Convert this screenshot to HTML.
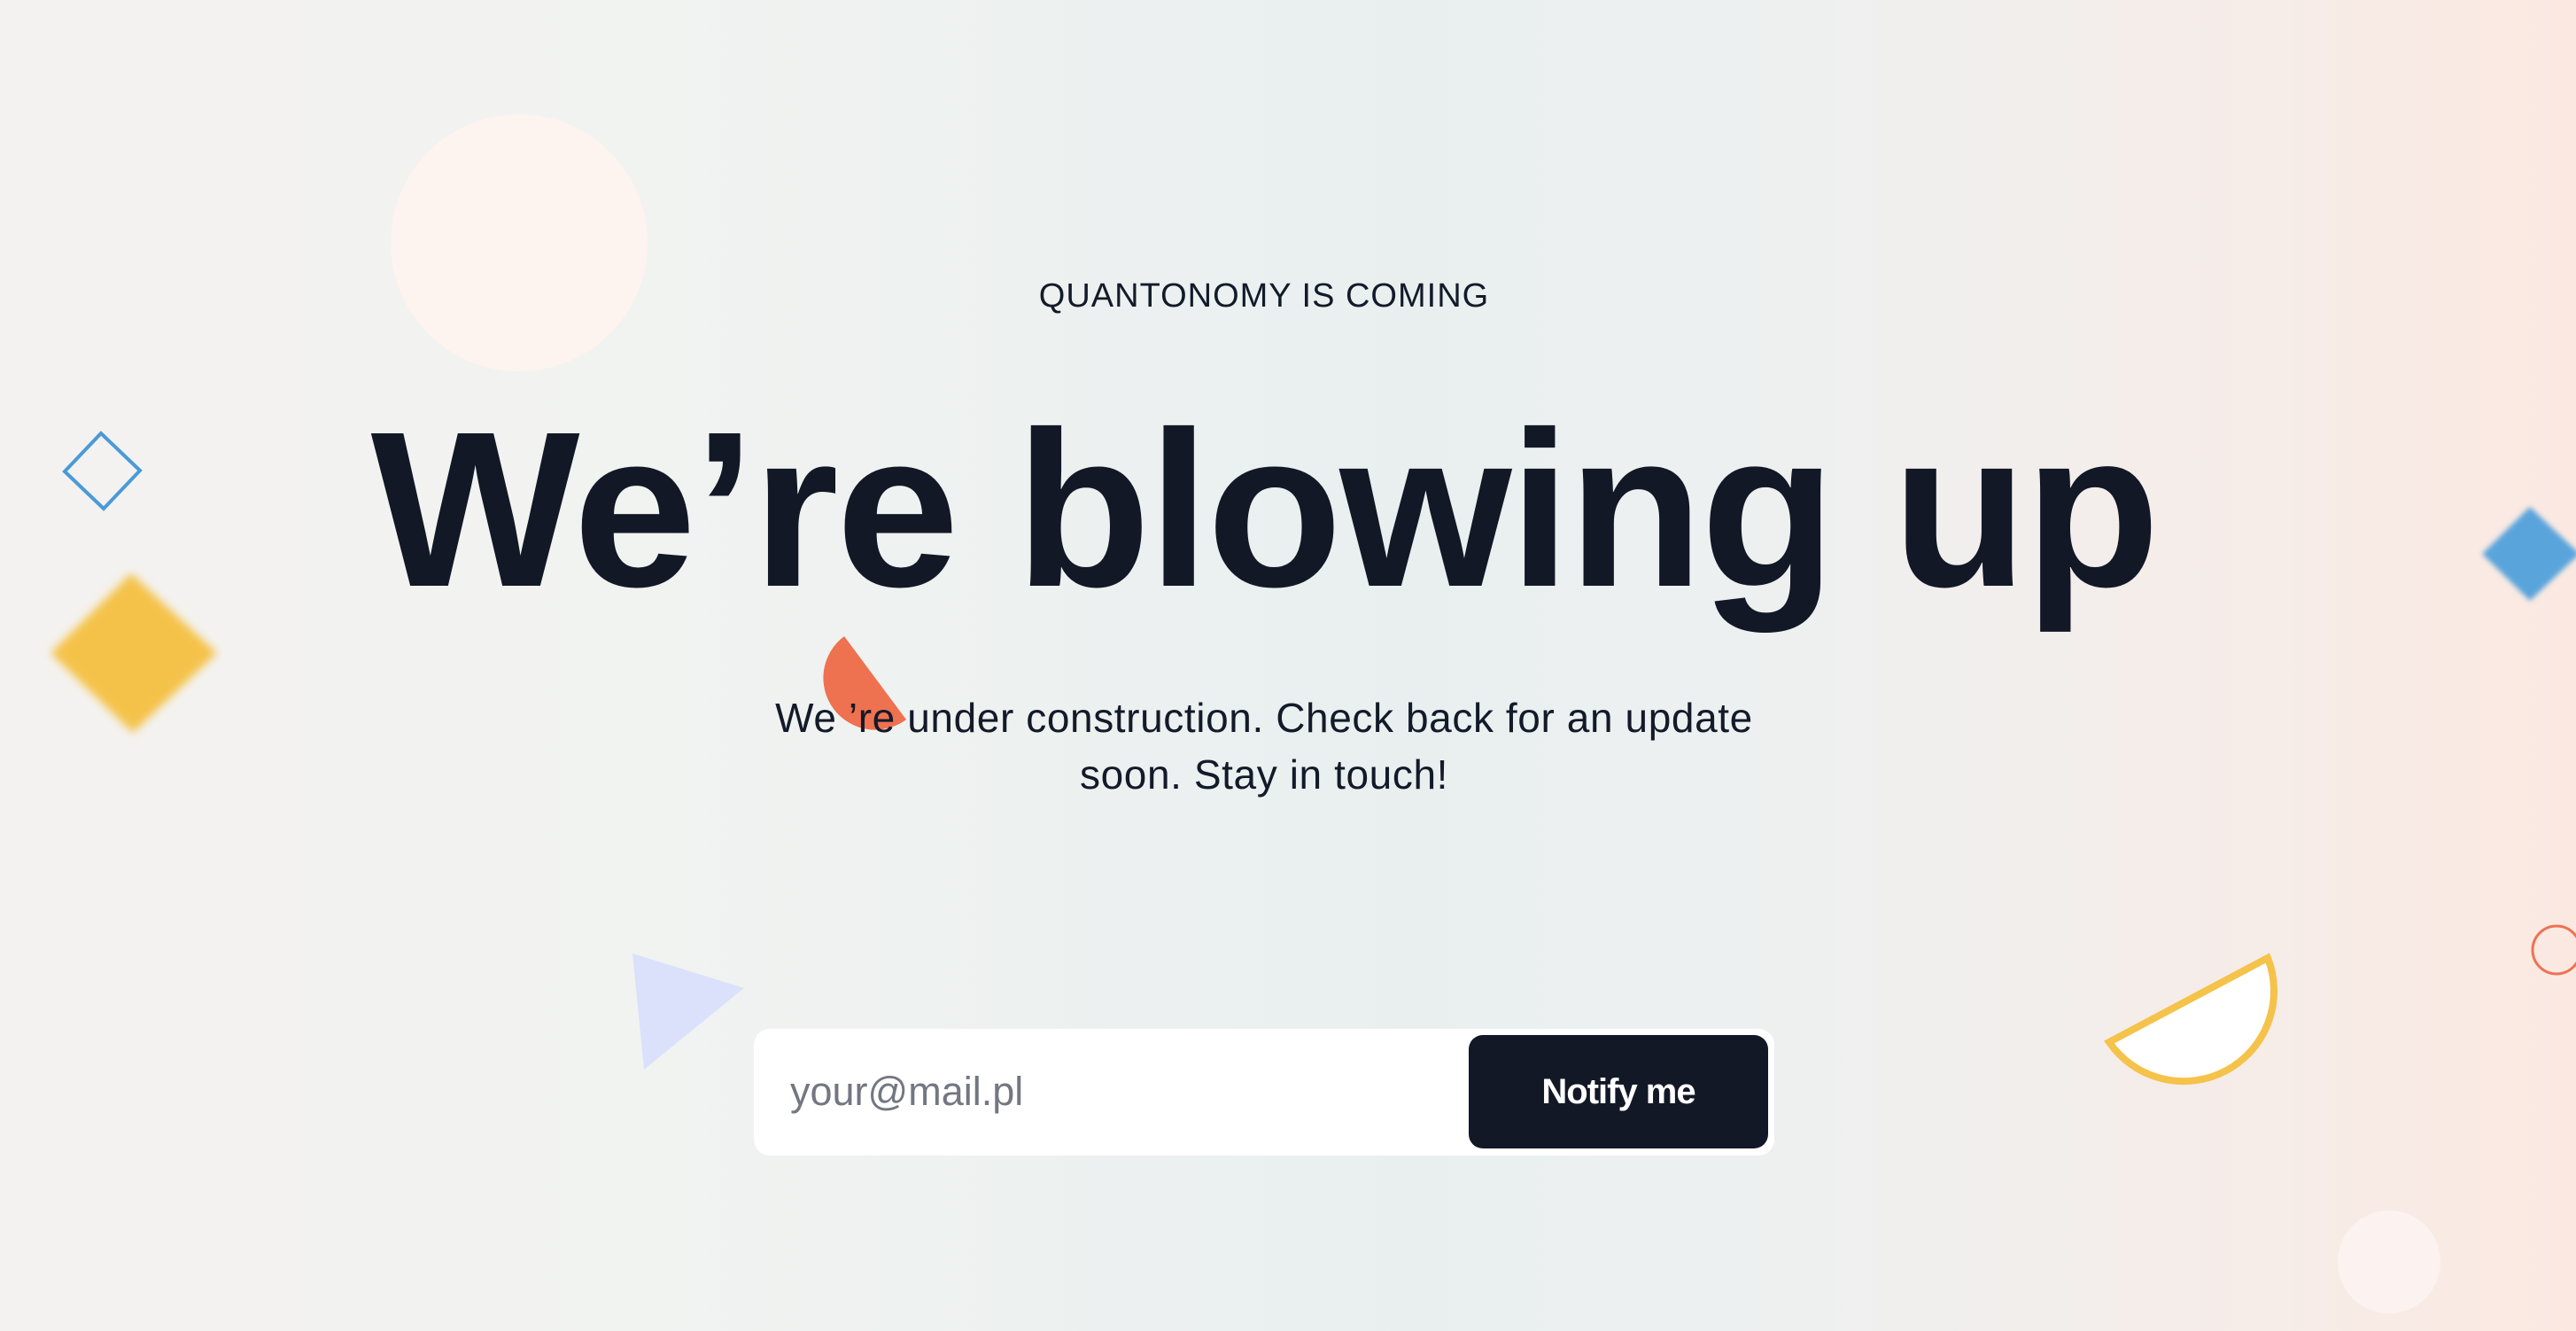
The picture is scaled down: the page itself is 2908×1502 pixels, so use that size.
<!DOCTYPE html>
<html><head><meta charset="utf-8"><style>
html,body{margin:0;padding:0}
body{width:2908px;height:1502px;overflow:hidden;position:relative;font-family:"Liberation Sans",sans-serif;
background:linear-gradient(90deg,#f4f2f0 0%,#f1f3f1 25%,#e9efef 55%,#eef0f0 70%,#f6ece8 88%,#fbe9e1 100%);}
.abs{position:absolute}
.t1{left:0;width:2854px;text-align:center;top:313px;font-size:38px;color:#131a29;letter-spacing:1px}
.h{left:0;width:2854px;text-align:center;top:450px;font-size:250px;font-weight:bold;color:#121826;letter-spacing:-3px;line-height:1;white-space:nowrap}
.p{left:0;width:2854px;text-align:center;top:778px;font-size:46px;line-height:64px;color:#131a29;letter-spacing:0.6px}
.form{left:851px;top:1161px;width:1152px;height:143px;background:#fff;border-radius:18px}
.ph{left:892px;top:1206px;font-size:45px;color:#737782}
.btn{left:1658px;top:1168px;width:338px;height:128px;background:#121826;border-radius:16px;color:#fff;font-weight:bold;font-size:40px;line-height:128px;text-align:center;letter-spacing:-1px}
</style></head><body>
<div class="abs" style="left:441px;top:129px;width:290px;height:290px;border-radius:50%;background:#fdf3ef"></div>
<div class="abs" style="left:2639px;top:1366px;width:116px;height:116px;border-radius:50%;background:#fcf3f0"></div>
<svg class="abs" style="left:0;top:0" width="2908" height="1502">
<defs><filter id="b" x="-20%" y="-20%" width="140%" height="140%"><feGaussianBlur stdDeviation="5"/></filter>
<filter id="b2"><feGaussianBlur stdDeviation="3"/></filter></defs>
<polygon points="114,489 158,531 117,574 73,532" fill="none" stroke="#4a9ad8" stroke-width="4"/>
<polygon points="148,647 245,737 150,827 57,737" fill="#f5c24a" filter="url(#b)"/>
<polygon points="2856,572 2912,625 2856,678 2802,625" fill="#5aa4dc" filter="url(#b2)"/>
<circle cx="2886" cy="1072" r="27" fill="none" stroke="#ee7253" stroke-width="3"/>
<polygon points="714,1076 840,1115 727,1207" fill="#dbe1fb"/>
<path d="M2381,1176 L2560,1081 A102,102 0 0 1 2381,1176 Z" fill="#fff" stroke="#f5c24a" stroke-width="8"/>
</svg>
<div class="abs t1">QUANTONOMY IS COMING</div>
<div class="abs h">We’re blowing up</div>
<svg class="abs" style="left:0;top:0" width="2908" height="1502">
<path d="M953,718 L1023,812 A58,58 0 0 1 953,718 Z" fill="#ee7150"/>
</svg>
<div class="abs p">We ’re under construction. Check back for an update<br>soon. Stay in touch!</div>
<div class="abs form"></div>
<div class="abs ph">your@mail.pl</div>
<div class="abs btn">Notify me</div>
</body></html>
